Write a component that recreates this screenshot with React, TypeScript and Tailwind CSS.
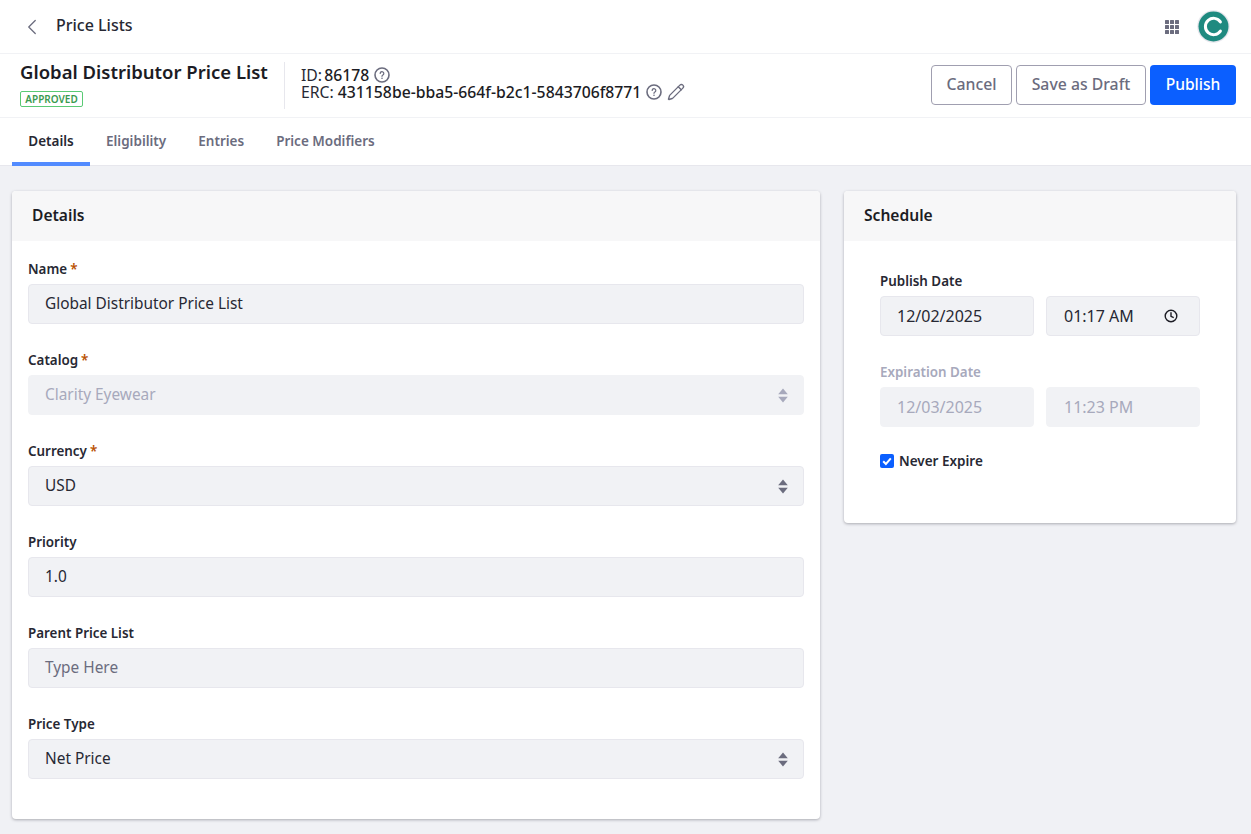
import { ChevronLeft, Pencil } from "lucide-react";

const FONT = "font-['Noto_Sans',sans-serif]";

const HelpIcon = () => (
  <svg width="16" height="16" viewBox="0 0 16 16" fill="none" className="shrink-0">
    <circle cx="8" cy="8" r="7" stroke="#6b6c7e" strokeWidth="1.6" />
    <path d="M6.2 6.4a1.8 1.8 0 1 1 2.7 1.6c-.6.35-.9.7-.9 1.3" stroke="#6b6c7e" strokeWidth="1.2" strokeLinecap="round" />
    <circle cx="8" cy="11.3" r=".8" fill="#6b6c7e" />
  </svg>
);

const SelectArrows = ({ color }: { color: string }) => (
  <svg width="10" height="15" viewBox="0 0 10 15" style={{ fill: color }}>
    <path d="M5 0.5 L9.8 6.3 H0.2 Z" />
    <path d="M5 14.5 L9.8 8.7 H0.2 Z" />
  </svg>
);

const GridIcon = () => (
  <svg width="16" height="16" viewBox="0 0 16 16" fill="#6b6c7e">
    {[1, 6, 11].map((y) =>
      [1, 6, 11].map((x) => <rect key={`${x}-${y}`} x={x} y={y} width="4" height="4" rx=".5" />)
    )}
  </svg>
);

const Avatar = () => (
  <svg width="33" height="33" viewBox="0 0 33 33">
    <circle cx="16.5" cy="16.5" r="16.3" fill="#e7e7ed" />
    <circle cx="16.5" cy="16.5" r="15" fill="#1f8a80" />
    <path d="M23.4 11.9a8.2 8.2 0 1 0 0 9.2" fill="none" stroke="#fff" strokeWidth="3" strokeLinecap="round" />
  </svg>
);

const Field = ({
  label,
  required,
  value,
  muted,
  placeholder,
  select,
  disabled,
}: {
  label: string;
  required?: boolean;
  value?: string;
  muted?: boolean;
  placeholder?: boolean;
  select?: boolean;
  disabled?: boolean;
}) => (
  <div className="mb-[26px]">
    <div className="mb-[5px] h-[20px] text-[13.4px] leading-[20px] font-semibold text-[#272833]">
      {label}
      {required && <span className="ml-[3px] text-[#b95000]">*</span>}
    </div>
    <div
      className={`flex h-[40px] items-center justify-between rounded-[4px] border bg-[#f1f2f5] pr-[15px] pl-[16px] text-[15.4px] ${
        disabled ? "border-[#f1f2f5]" : "border-[#e7e7ed]"
      } ${muted ? "text-[#a7a9bc]" : placeholder ? "text-[#6b6c7e]" : "text-[#272833]"}`}
    >
      <span className="pb-[1px]">{value}</span>
      {select && <SelectArrows color={disabled ? "#a7a9bc" : "#6b6c7e"} />}
    </div>
  </div>
);

const DateBox = ({ value, disabled, clock, time }: { value: string; disabled?: boolean; clock?: boolean; time?: boolean }) => (
  <div
    className={`flex h-[40px] w-[154px] items-center justify-between rounded-[4px] border bg-[#f1f2f5] pr-[21px] text-[16px] ${
      time ? "pl-[17px]" : "pl-[16px]"
    } ${disabled ? "border-[#f1f2f5] text-[#a7a9bc]" : "border-[#e7e7ed] text-[#272833]"}`}
  >
    <span className="pb-[1px]">{value}</span>
    {clock && (
      <svg width="14" height="14" viewBox="0 0 14 14" fill="none" stroke="#1c1c24" strokeWidth="1.4">
        <circle cx="7" cy="7" r="5.8" />
        <path d="M7 3.8V7.3L9.2 8.4" strokeLinecap="round" />
      </svg>
    )}
  </div>
);

export default function App() {
  return (
    <div className={`${FONT} min-h-[834px] bg-[#f0f1f5] text-[#272833]`}>
      {/* Barre du haut */}
      <div className="flex h-[54px] items-center justify-between border-b border-[#f1f2f5] bg-white pr-[21px] pl-[19px]">
        <div className="flex items-center gap-[11px]">
          <ChevronLeft size={26} color="#6b6c7e" strokeWidth={1.2} />
          <span className="pb-[3px] text-[16px] font-medium">Price Lists</span>
        </div>
        <div className="flex items-center gap-[17px]">
          <GridIcon />
          <Avatar />
        </div>
      </div>

      {/* En-tête */}
      <div className="flex h-[64px] items-center justify-between border-b border-[#f1f2f5] bg-white pr-[15px] pb-[1px] pl-[20px]">
        <div className="flex items-center">
          <div className="-mt-[3px] w-[264px]">
            <div className="text-[18.5px] leading-[24px] font-semibold text-[#1c1c24]">Global Distributor Price List</div>
            <span className="mt-[7px] block h-[16px] w-[63px] rounded-[2px] border border-[#5aca75] text-center text-[10px] leading-[14px] font-semibold text-[#3a9a50]">
              APPROVED
            </span>
          </div>
          <div className="flex h-[47px] flex-col justify-center border-l border-[#e7e7ed] pb-[2px] pl-[16px] text-[15.75px] leading-[16px]">
            <div className="flex items-center gap-[5px]">
              <span>
                ID: <span className="-ml-[2px] font-medium text-[#1c1c24]">86178</span>
              </span>
              <HelpIcon />
            </div>
            <div className="flex items-center gap-[5px]">
              <span>
                ERC: <span className="font-medium text-[#1c1c24]">431158be-bba5-664f-b2c1-5843706f8771</span>
              </span>
              <HelpIcon />
              <Pencil size={18} color="#6b6c7e" strokeWidth={1.8} />
            </div>
          </div>
        </div>
        <div className="flex items-center gap-[4px]">
          <button className="h-[40px] w-[81px] rounded-[4px] border border-[#a09fb0] bg-white pb-[1px] text-[15.8px] font-medium text-[#6b6c7e]">
            Cancel
          </button>
          <button className="h-[40px] w-[130px] rounded-[4px] border border-[#a09fb0] bg-white pb-[1px] text-[15.8px] font-medium text-[#6b6c7e]">
            Save as Draft
          </button>
          <button className="h-[40px] w-[86px] rounded-[4px] bg-[#0b5fff] pb-[1px] text-[15.6px] font-medium text-white">Publish</button>
        </div>
      </div>

      {/* Onglets */}
      <div className="flex h-[48px] items-stretch border-b border-[#e7e7ed] bg-white pl-[12px] text-[13.5px] font-semibold">
        <div className="-mb-px flex w-[78px] items-center justify-center border-b-[4px] border-[#528bff] pt-[2px] text-[#272833]">Details</div>
        <div className="flex items-center px-[16px] text-[#6b6c7e]">Eligibility</div>
        <div className="flex items-center px-[16px] text-[#6b6c7e]">Entries</div>
        <div className="flex items-center px-[16px] text-[#6b6c7e]">Price Modifiers</div>
      </div>

      {/* Contenu */}
      <div className="flex items-start gap-[24px] pt-[25px] pr-[15px] pl-[12px]">
        <div className="w-[808px] overflow-hidden rounded-[4px] bg-white shadow-[0_1px_3px_rgba(39,40,51,0.35)]">
          <div className="flex h-[50px] items-center bg-[#f7f7f8] pl-[20px] text-[15.6px] font-semibold text-[#1c1c24]">Details</div>
          <div className="h-[578px] px-[16px] pt-[18px]">
            <Field label="Name" required value="Global Distributor Price List" />
            <Field label="Catalog" required value="Clarity Eyewear" muted select disabled />
            <Field label="Currency" required value="USD" select />
            <Field label="Priority" value="1.0" />
            <Field label="Parent Price List" value="Type Here" placeholder />
            <Field label="Price Type" value="Net Price" select />
          </div>
        </div>

        <div className="w-[392px] overflow-hidden rounded-[4px] bg-white shadow-[0_1px_3px_rgba(39,40,51,0.35)]">
          <div className="flex h-[50px] items-center bg-[#f7f7f8] pl-[20px] text-[15.6px] font-semibold text-[#1c1c24]">Schedule</div>
          <div className="h-[282px] px-[36px] pt-[30px]">
            <div className="mb-[5px] h-[20px] text-[13.4px] leading-[20px] font-semibold">Publish Date</div>
            <div className="mb-[26px] flex gap-[12px]">
              <DateBox value="12/02/2025" />
              <DateBox value="01:17 AM" clock time />
            </div>
            <div className="mb-[5px] h-[20px] text-[13.4px] leading-[20px] font-semibold text-[#a7a9bc]">Expiration Date</div>
            <div className="mb-[24px] flex gap-[12px]">
              <DateBox value="12/03/2025" disabled />
              <DateBox value="11:23 PM" disabled time />
            </div>
            <div className="flex items-center gap-[5px] text-[13.5px] font-semibold">
              <svg width="14" height="14" viewBox="0 0 14 14">
                <rect width="14" height="14" rx="2" fill="#0b5fff" />
                <path d="M3.2 7.2L5.9 10L10.8 4.4" fill="none" stroke="#fff" strokeWidth="2" />
              </svg>
              Never Expire
            </div>
          </div>
        </div>
      </div>
    </div>
  );
}
